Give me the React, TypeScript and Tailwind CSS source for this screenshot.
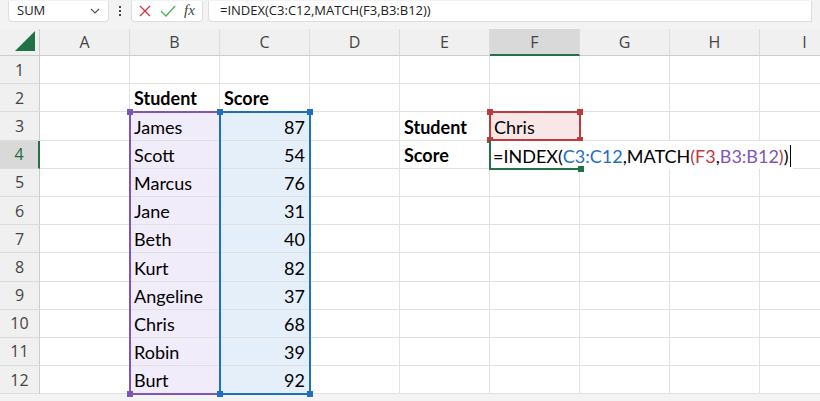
import React from 'react'

const cols = ['A', 'B', 'C', 'D', 'E', 'F', 'G', 'H', 'I']
const students: [string, number][] = [
  ['James', 87], ['Scott', 54], ['Marcus', 76], ['Jane', 31], ['Beth', 40],
  ['Kurt', 82], ['Angeline', 37], ['Chris', 68], ['Robin', 39], ['Burt', 92],
]

function cellContent(r: number, c: number): { text?: React.ReactNode; cls?: string } {
  if (r === 2 && c === 1) return { text: 'Student', cls: 'font-bold' }
  if (r === 2 && c === 2) return { text: 'Score', cls: 'font-bold' }
  if (r >= 3 && c === 1) return { text: students[r - 3][0], cls: 'bg-[#f1ecf9]' }
  if (r >= 3 && c === 2) return { text: students[r - 3][1], cls: 'bg-[#e5eff9] justify-end' }
  if (r === 3 && c === 4) return { text: 'Student', cls: 'font-bold' }
  if (r === 4 && c === 4) return { text: 'Score', cls: 'font-bold' }
  if (r === 3 && c === 5) return { text: 'Chris', cls: 'bg-[#f9e7e7]' }
  return {}
}

const Handle = ({ cls }: { cls: string }) => <div className={`absolute w-[6px] h-[6px] ${cls}`} />

export default function App() {
  return (
    <div className="w-[820px] h-[401px] bg-[#f3f3f3] overflow-hidden" style={{ fontFamily: 'Lato, "Noto Sans", sans-serif' }}>
      {/* formula bar */}
      <div className="flex items-center h-[22px] gap-[5px] px-[8px] text-[13px] text-[#222]" style={{ fontFamily: '"Open Sans", sans-serif' }}>
        <div className="w-[101px] h-[21px] bg-white border border-[#ddd] border-t-0 rounded-b flex items-center justify-between px-[8px]">
          <span>SUM</span>
          <svg width="10" height="10" viewBox="0 0 10 10"><path d="M1 3l4 4 4-4" fill="none" stroke="#555" strokeWidth="1.2" /></svg>
        </div>
        <div className="w-[12px] flex flex-col items-center gap-[2px]">
          <span className="w-[2px] h-[2px] bg-[#444]" /><span className="w-[2px] h-[2px] bg-[#444]" /><span className="w-[2px] h-[2px] bg-[#444]" />
        </div>
        <div className="w-[72px] h-[21px] bg-white border border-[#ddd] border-t-0 rounded-b flex items-center gap-[8px] px-[6px]">
          <svg width="14" height="14" viewBox="0 0 14 14"><path d="M2 2l10 10M12 2L2 12" stroke="#d13438" strokeWidth="1.3" /></svg>
          <svg width="16" height="14" viewBox="0 0 16 14"><path d="M1 7l5 5 9-10" fill="none" stroke="#4caf50" strokeWidth="1.3" /></svg>
          <span className="italic text-[15px] text-[#444]" style={{ fontFamily: '"Liberation Serif", serif' }}>fx</span>
        </div>
        <div className="flex-1 h-[21px] bg-white border border-[#ddd] border-t-0 rounded-bl flex items-center px-[11px]">
          =INDEX(C3:C12,MATCH(F3,B3:B12))
        </div>
      </div>
      {/* sheet */}
      <div className="relative mt-[7px]">
        <div className="grid grid-cols-[40px_repeat(9,90px)] grid-rows-[27px_repeat(12,28.2px)] bg-white">
          <div className="bg-[#f0f0f0] border-r border-b border-[#ccc] flex items-end justify-end p-[3px]">
            <svg width="22" height="22" viewBox="0 0 22 22"><path d="M21 1V21H1Z" fill="#217346" /></svg>
          </div>
          {cols.map((c) => (
            <div key={c} className={`flex items-center justify-center text-[16px] text-[#444] border-r border-[#dcdcdc] ${c === 'F' ? 'bg-[#d9d9d9] text-[#1e6b41] border-b-2 border-b-[#217346]' : 'bg-[#f0f0f0] border-b border-b-[#ccc]'}`} style={{ fontFamily: '"Open Sans", sans-serif' }}>{c}</div>
          ))}
          {Array.from({ length: 12 }, (_, i) => i + 1).map((r) => (
            <React.Fragment key={r}>
              <div className={`flex items-center justify-center text-[16px] border-b border-[#dcdcdc] ${r === 4 ? 'bg-[#d9d9d9] text-[#1e6b41] border-r-2 border-r-[#217346]' : 'bg-[#f0f0f0] text-[#444] border-r border-r-[#ccc]'}`} style={{ fontFamily: '"Open Sans", sans-serif' }}>{r}</div>
              {cols.map((_, c) => {
                const { text, cls } = cellContent(r, c)
                return (
                  <div key={c} className={`flex items-end pb-[1px] px-[4px] text-[18px] leading-[24px] text-black border-r border-b border-[#e1e1e1] whitespace-nowrap ${cls ?? ''}`}>{text}</div>
                )
              })}
            </React.Fragment>
          ))}
        </div>
        {/* range highlights */}
        <div className="absolute left-[129px] top-[82px] w-[92px] h-[284px] border-2 border-[#7f56b8] pointer-events-none">
          <Handle cls="-left-[4px] -top-[4px] bg-[#7f56b8]" />
          <Handle cls="-right-[4px] -top-[4px] bg-[#7f56b8]" />
          <Handle cls="-left-[4px] -bottom-[4px] bg-[#7f56b8]" />
          <Handle cls="-right-[4px] -bottom-[4px] bg-[#7f56b8]" />
        </div>
        <div className="absolute left-[219px] top-[82px] w-[92px] h-[284px] border-2 border-[#1f6fbf] pointer-events-none">
          <Handle cls="-left-[4px] -top-[4px] bg-[#1f6fbf]" />
          <Handle cls="-right-[4px] -top-[4px] bg-[#1f6fbf]" />
          <Handle cls="-left-[4px] -bottom-[4px] bg-[#1f6fbf]" />
          <Handle cls="-right-[4px] -bottom-[4px] bg-[#1f6fbf]" />
        </div>
        <div className="absolute left-[489px] top-[82px] w-[92px] h-[30px] border-2 border-[#c0393b] pointer-events-none">
          <Handle cls="-left-[4px] -top-[4px] bg-[#c0393b]" />
          <Handle cls="-right-[4px] -top-[4px] bg-[#c0393b]" />
          <Handle cls="-left-[4px] -bottom-[4px] bg-[#c0393b]" />
          <Handle cls="-right-[4px] -bottom-[4px] bg-[#c0393b]" />
        </div>
        {/* active cell F4 editing */}
        <div className="absolute left-[489px] top-[112px] h-[28px] flex items-end pb-[1px] pl-[4px] pr-[2px] bg-white text-[18px] leading-[24px] whitespace-nowrap">
          <span>=INDEX(</span><span className="text-[#1f6fbf]">C3:C12</span><span>,MATCH</span><span className="text-[#c0393b]">(F3</span><span>,</span><span className="text-[#7f56b8]">B3:B12</span><span className="text-[#c0393b]">)</span><span>)</span>
          <span className="ml-[2px] mb-[1px] w-[1px] h-[22px] bg-black" />
        </div>
        <div className="absolute left-[489px] top-[111px] w-[92px] h-[30px] border-l-2 border-b-2 border-[#217346] pointer-events-none">
          <Handle cls="-right-[3px] -bottom-[4px] bg-[#217346]" />
        </div>
      </div>
    </div>
  )
}
